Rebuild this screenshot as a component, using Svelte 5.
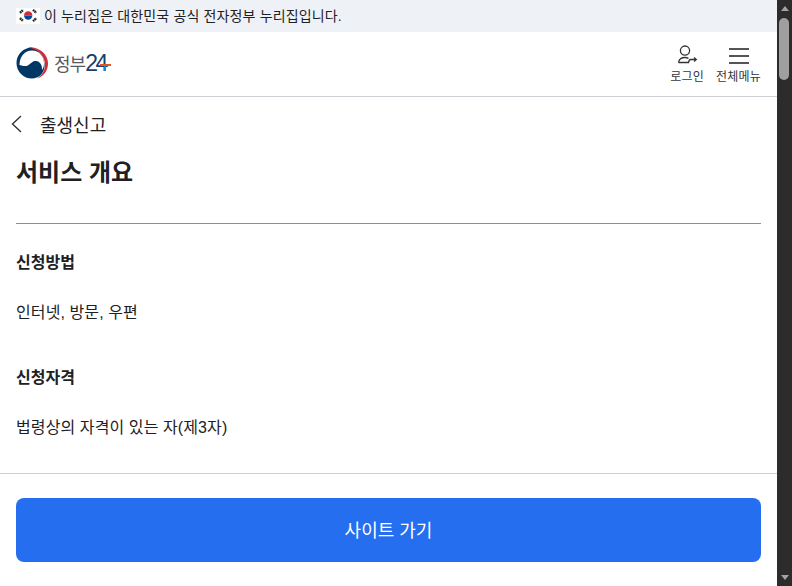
<script lang="ts">
  const fields = [
    { label: "신청방법", value: "인터넷, 방문, 우편" },
    { label: "신청자격", value: "법령상의 자격이 있는 자(제3자)" },
  ];
</script>

<div class="window">
  <div class="page">
    <div class="notice">
      <svg class="flag" viewBox="0 0 24 16" width="24" height="16" aria-hidden="true">
        <rect width="24" height="16" fill="#fff" />
        <path d="M8 7.500a4.200 4.200 0 0 1 8.400 0z" fill="#cd2e3a" />
        <path d="M8 7.500a4.200 4.200 0 0 0 8.400 0z" fill="#0047a0" />
        <g stroke="#222" stroke-width="2.400" stroke-dasharray="1.600 .5">
          <path d="M4 4.800l3.300-3" />
          <path d="M17 1.800l3.300 3" />
          <path d="M4 10.200l3.300 3" />
          <path d="M17 13.200l3.300-3" />
        </g>
      </svg>
      <span>이 누리집은 대한민국 공식 전자정부 누리집입니다.</span>
    </div>

    <header class="topbar">
      <div class="logo">
        <svg viewBox="0 0 32 32" width="32" height="32" aria-hidden="true">
          <path d="M16 .5A15.500 15.500 0 0 0 .5 16 15.500 15.500 0 0 0 16 31.500c7 0 12-5 12.500-12C29 12 25 4 16 .5Z" fill="#003764" />
          <path d="M3.500 18C3.500 9 9 3.500 16 3.500c7 0 12 5.500 12 12.500 0 3-.5 5-2 7 .5-6-3-9.500-7-9-4 .5-5 4.500-9 5-3 .4-5-1-6.500-1Z" fill="#fff" />
          <path d="M12 .8C22-1 31.800 6.500 32 16c.2 7.500-4.500 13.500-11 15.500 4.800-3 8.200-8 8-14.500C28.600 9 21.500 1.500 12 .8Z" fill="#cd2e3a" />
        </svg>
        <span class="logo-text">정부<b>24<i class="h"></i><i class="v"></i></b></span>
      </div>
      <nav class="actions">
        <div class="action">
          <svg viewBox="0 0 22 22" width="22" height="22" fill="none" stroke="#333" stroke-width="1.300" aria-hidden="true">
            <circle cx="9" cy="5.600" r="4.600" />
            <path d="M2.500 17.500c.5-3.500 3-5 6.500-5 1.500 0 2.500.3 3.500.8M2.500 17.500h10c.5-2 1-3 2-3h5.500" />
            <path d="M18 12.500l2.300 2-2.300 2" />
          </svg>
          <span>로그인</span>
        </div>
        <div class="action">
          <div class="burger"><i></i><i></i><i></i></div>
          <span>전체메뉴</span>
        </div>
      </nav>
    </header>

    <div class="titlebar">
      <svg viewBox="0 0 12 18" width="12" height="18" fill="none" stroke="#333" stroke-width="1.400" aria-hidden="true">
        <path d="M10 1L1.500 9l8.500 8" />
      </svg>
      <span>출생신고</span>
    </div>

    <main class="content">
      <h1>서비스 개요</h1>
      {#each fields as field}
        <h2>{field.label}</h2>
        <p>{field.value}</p>
      {/each}
    </main>

    <footer class="bottom">
      <button class="go">사이트 가기</button>
    </footer>
  </div>

  <div class="scrollbar">
    <div class="arrow up"></div>
    <div class="track"><div class="thumb"></div></div>
    <div class="arrow down"></div>
  </div>
</div>

<style>
  :global(body) {
    margin: 0;
    background: #fff;
  }

  .window {
    display: flex;
    width: 792px;
    height: 586px;
    overflow: hidden;
    font-family: "Liberation Sans", "Noto Sans CJK KR", sans-serif;
    color: #1e2124;
  }

  .page {
    flex: 1;
    min-width: 0;
    display: flex;
    flex-direction: column;
  }

  .notice {
    height: 32px;
    flex: none;
    box-sizing: border-box;
    padding: 0 0 2px 16px;
    display: flex;
    align-items: center;
    gap: 4px;
    background: #eef2f7;
    font-size: 14px;
    letter-spacing: 0.15px;
  }

  .flag {
    margin-top: 2px;
  }

  .topbar {
    height: 65px;
    box-sizing: border-box;
    flex: none;
    display: flex;
    align-items: center;
    justify-content: space-between;
    padding: 0 16px;
    border-bottom: 1px solid #cdd1d5;
  }

  .logo {
    display: flex;
    align-items: center;
    gap: 6px;
    margin-bottom: 2px;
  }

  .logo-text {
    font-size: 18px;
    letter-spacing: -1px;
    color: #555b61;
    display: flex;
    align-items: center;
  }

  .logo-text b {
    position: relative;
    margin-left: 0;
    font-size: 23px;
    font-weight: 400;
    color: #17416b;
    letter-spacing: -2.500px;
  }

  .logo-text i {
    position: absolute;
  }

  .logo-text .h {
    left: 15px;
    top: 14px;
    width: 11px;
    height: 2px;
    background: #e8541e;
  }

  .logo-text .v {
    left: 19px;
    top: 16px;
    width: 2px;
    height: 5px;
    background: #1b87c9;
  }

  .actions {
    display: flex;
    gap: 12px;
  }

  .action {
    display: flex;
    flex-direction: column;
    align-items: center;
    font-size: 12px;
    letter-spacing: 0.2px;
    color: #33363d;
  }

  .burger {
    height: 22px;
    display: flex;
    flex-direction: column;
    justify-content: center;
    gap: 5px;
  }

  .burger i {
    display: block;
    width: 20px;
    height: 2px;
    background: #555;
  }

  .titlebar {
    height: 54px;
    flex: none;
    display: flex;
    align-items: center;
    gap: 17px;
    padding-left: 11px;
    font-size: 18px;
  }

  .content {
    flex: 1;
    min-height: 0;
    padding: 4px 16px 0;
  }

  h1 {
    margin: 0 0 27px;
    padding-bottom: 32px;
    border-bottom: 1px solid #8e8e8e;
    font-size: 24px;
    line-height: 36px;
    font-weight: 700;
  }

  h2 {
    margin: 0 0 26px;
    font-size: 16px;
    line-height: 24px;
    font-weight: 700;
  }

  p {
    margin: 0;
    font-size: 16px;
    line-height: 24px;
    letter-spacing: 0.1px;
  }

  p + h2 {
    margin-top: 41px;
  }

  .bottom {
    flex: none;
    height: 113px;
    box-sizing: border-box;
    padding: 24px 16px 0;
    border-top: 1px solid #cdd1d5;
  }

  .go {
    display: block;
    width: 100%;
    height: 64px;
    border: 0;
    border-radius: 8px;
    padding: 0 0 2px;
    background: #256ef0;
    color: #fff;
    font: inherit;
    font-size: 18px;
    font-weight: 400;
  }

  .scrollbar {
    width: 15px;
    flex: none;
    display: flex;
    flex-direction: column;
    background: #2c2c2c;
  }

  .arrow {
    height: 17px;
    flex: none;
    display: flex;
    justify-content: center;
    align-items: center;
  }

  .arrow::before {
    content: "";
    border-left: 4px solid transparent;
    border-right: 4px solid transparent;
  }

  .arrow.up::before {
    border-bottom: 5px solid #a3a3a3;
  }

  .arrow.down::before {
    border-top: 5px solid #a3a3a3;
  }

  .track {
    flex: 1;
    padding: 1px 3px 0 2px;
  }

  .thumb {
    height: 62px;
    border-radius: 5px;
    background: #9f9f9f;
  }
</style>
